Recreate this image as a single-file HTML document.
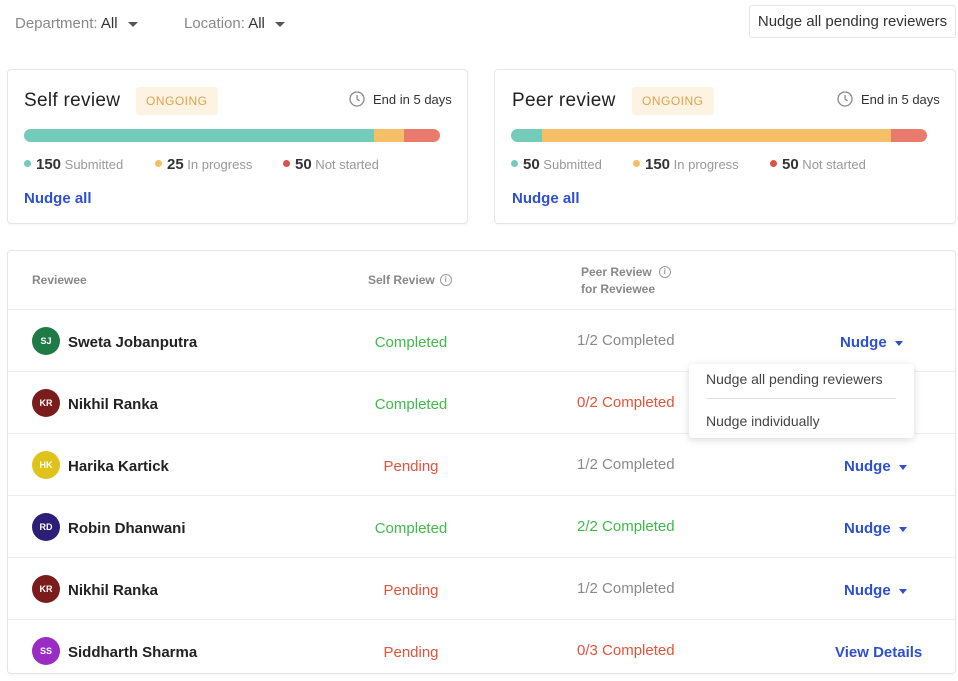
<!DOCTYPE html>
<html><head><style>
*{margin:0;padding:0;box-sizing:border-box}
body{width:958px;height:679px;background:#fff;font-family:"Liberation Sans",sans-serif;position:relative;overflow:hidden;color:#2a2a2a}
.a{position:absolute;white-space:nowrap}
.card{position:absolute;border:1px solid #e6e6e6;border-radius:4px;background:#fff;box-shadow:0 1px 2px rgba(0,0,0,.04)}
.tri{display:inline-block;width:0;height:0;border-left:5px solid transparent;border-right:5px solid transparent;border-top:5px solid #555;vertical-align:middle;margin-left:10px}
.ttl{font-size:19px;color:#222;letter-spacing:.3px}
.badge{background:#fdf3e3;color:#e0a24a;font-size:12px;letter-spacing:.5px;padding:7px 10px;border-radius:3px}
.dot{display:inline-block;width:7px;height:7px;border-radius:50%;vertical-align:middle;margin-right:5px;position:relative;top:-2px}
.leg{font-size:13px;color:#999}.leg b{font-size:15px;color:#333}
.blue{color:#2e50cf;font-weight:bold;font-size:15px}
.row{position:absolute;left:8px;width:947px;height:62px;border-top:1px solid #ececec}
.av{position:absolute;left:24px;top:17px;width:28px;height:28px;border-radius:50%;color:#fff;font-size:9px;font-weight:bold;text-align:center;line-height:28px}
.nm{position:absolute;left:60px;top:24px;font-size:15px;font-weight:bold;color:#222}
.sr{position:absolute;left:303px;width:200px;text-align:center;top:24px;font-size:15px}
.pr{position:absolute;left:569px;top:22px;font-size:15px}
.ng{position:absolute;left:836px;top:24px;font-size:15px;font-weight:bold;color:#2e50cf}
.ng i{display:inline-block;border-left:4px solid transparent;border-right:4px solid transparent;border-top:5px solid #2e50cf;vertical-align:middle;margin-left:8px}
.g{color:#3fba4a}.r{color:#e2533b}.gr{color:#8a8a8a}
.info{display:inline-block;width:12px;height:12px;border:1px solid #999;border-radius:50%;font-size:8px;text-align:center;line-height:10px;color:#999;margin-left:5px;vertical-align:middle;position:relative;top:-1px}
</style></head><body>
<div class="a" style="left:15px;top:15px;font-size:15px;color:#888">Department: <span style="color:#333">All</span><span class="tri"></span></div>
<div class="a" style="left:184px;top:15px;font-size:15px;color:#888">Location: <span style="color:#333">All</span><span class="tri"></span></div>
<div class="a" style="left:749px;top:5px;width:207px;height:33px;border:1px solid #e4e4e4;border-radius:3px;font-size:15px;color:#333;line-height:31px;text-align:center">Nudge all pending reviewers</div>

<div class="card" style="left:7px;top:69px;width:461px;height:155px">
 <div class="a ttl" style="left:16px;top:20px">Self review</div>
 <div class="a badge" style="left:128px;top:17px">ONGOING</div>
 <div class="a" style="left:341px;top:22px;font-size:13px;color:#333"><svg width="16" height="16" viewBox="0 0 16 16" style="vertical-align:middle;margin-right:8px;position:relative;top:-2px"><circle cx="8" cy="8" r="7" fill="none" stroke="#888" stroke-width="1.3"/><path d="M8 4v4l2.5 2" fill="none" stroke="#888" stroke-width="1.3"/></svg>End in 5 days</div>
 <div class="a" style="left:16px;top:59px;width:416px;height:13px;border-radius:7px;overflow:hidden;display:flex"><div style="width:350px;background:#74cbb9"></div><div style="width:30px;background:#f4bf66"></div><div style="flex:1;background:#ea7b6c"></div></div>
 <div class="a leg" style="left:16px;top:86px"><span class="dot" style="background:#74cbb9"></span><b>150</b> Submitted</div>
 <div class="a leg" style="left:147px;top:86px"><span class="dot" style="background:#f4bf66"></span><b>25</b> In progress</div>
 <div class="a leg" style="left:275px;top:86px"><span class="dot" style="background:#d9534a"></span><b>50</b> Not started</div>
 <div class="a blue" style="left:16px;top:120px">Nudge all</div>
</div>

<div class="card" style="left:494px;top:69px;width:462px;height:155px">
 <div class="a ttl" style="left:17px;top:20px">Peer review</div>
 <div class="a badge" style="left:137px;top:17px">ONGOING</div>
 <div class="a" style="left:342px;top:22px;font-size:13px;color:#333"><svg width="16" height="16" viewBox="0 0 16 16" style="vertical-align:middle;margin-right:8px;position:relative;top:-2px"><circle cx="8" cy="8" r="7" fill="none" stroke="#888" stroke-width="1.3"/><path d="M8 4v4l2.5 2" fill="none" stroke="#888" stroke-width="1.3"/></svg>End in 5 days</div>
 <div class="a" style="left:16px;top:59px;width:416px;height:13px;border-radius:7px;overflow:hidden;display:flex"><div style="width:31px;background:#74cbb9"></div><div style="width:349px;background:#f4bf66"></div><div style="flex:1;background:#ea7b6c"></div></div>
 <div class="a leg" style="left:16px;top:86px"><span class="dot" style="background:#74cbb9"></span><b>50</b> Submitted</div>
 <div class="a leg" style="left:138px;top:86px"><span class="dot" style="background:#f4bf66"></span><b>150</b> In progress</div>
 <div class="a leg" style="left:275px;top:86px"><span class="dot" style="background:#d9534a"></span><b>50</b> Not started</div>
 <div class="a blue" style="left:17px;top:120px">Nudge all</div>
</div>

<div class="card" style="left:7px;top:250px;width:949px;height:424px"></div>
<div class="a" style="left:32px;top:273px;font-size:12px;font-weight:bold;color:#888">Reviewee</div>
<div class="a" style="left:368px;top:273px;font-size:12px;font-weight:bold;color:#888">Self Review<span class="info">i</span></div>
<div class="a" style="left:581px;top:264px;font-size:12px;font-weight:bold;color:#888;line-height:17px">Peer Review<span class="info" style="margin-left:7px">i</span><br>for Reviewee</div>

<div class="row" style="top:309px"><div class="av" style="background:#1f7a45">SJ</div><div class="nm">Sweta Jobanputra</div><div class="sr g">Completed</div><div class="pr gr">1/2 Completed</div><div class="ng" style="left:832px">Nudge<i></i></div></div>
<div class="row" style="top:371px"><div class="av" style="background:#7a1c1c">KR</div><div class="nm">Nikhil Ranka</div><div class="sr g">Completed</div><div class="pr r">0/2 Completed</div></div>
<div class="row" style="top:433px"><div class="av" style="background:#e0c21c">HK</div><div class="nm">Harika Kartick</div><div class="sr r">Pending</div><div class="pr gr">1/2 Completed</div><div class="ng">Nudge<i></i></div></div>
<div class="row" style="top:495px"><div class="av" style="background:#2d1f78">RD</div><div class="nm">Robin Dhanwani</div><div class="sr g">Completed</div><div class="pr g">2/2 Completed</div><div class="ng">Nudge<i></i></div></div>
<div class="row" style="top:557px"><div class="av" style="background:#7a1c1c">KR</div><div class="nm">Nikhil Ranka</div><div class="sr r">Pending</div><div class="pr gr">1/2 Completed</div><div class="ng">Nudge<i></i></div></div>
<div class="row" style="top:619px"><div class="av" style="background:#9a2cc4">SS</div><div class="nm">Siddharth Sharma</div><div class="sr r">Pending</div><div class="pr r">0/3 Completed</div><div class="ng" style="left:827px">View Details</div></div>

<div class="a" style="left:689px;top:364px;width:225px;height:74px;background:#fff;border-radius:4px;box-shadow:0 2px 8px rgba(0,0,0,.15)">
 <div class="a" style="left:17px;top:7px;font-size:14px;color:#444">Nudge all pending reviewers</div>
 <div class="a" style="left:17px;top:34px;width:190px;height:1px;background:#e4e4e4"></div>
 <div class="a" style="left:17px;top:49px;font-size:14px;color:#444">Nudge individually</div>
</div>
</body></html>
